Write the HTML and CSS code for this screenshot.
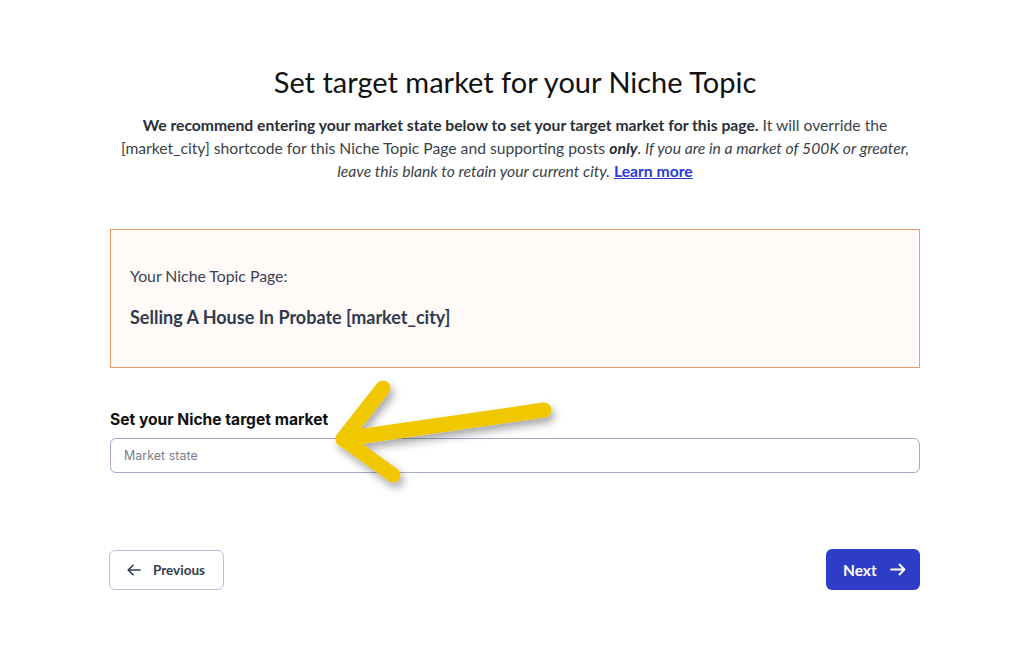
FILE: index.html
```html
<!DOCTYPE html>
<html lang="en">
<head>
    <meta charset="UTF-8">
    <meta name="viewport" content="width=device-width, initial-scale=1.0">
    <title>Set target market</title>
    <link rel="stylesheet" href="styles.css">
</head>
<body>
    <div class="page">
        <h1 class="title">Set target market for your Niche Topic</h1>
        <p class="intro">
            <strong>We recommend entering your market state below to set your target market for this page.</strong>
            It will override the [market_city] shortcode for this Niche Topic Page and supporting posts <strong><em>only</em></strong>.
            <em>If you are in a market of 500K or greater, leave this blank to retain your current city.</em>
            <a href="#">Learn more</a>
        </p>

        <div class="topic-box">
            <div class="topic-label">Your Niche Topic Page:</div>
            <div class="topic-name">Selling A House In Probate [market_city]</div>
        </div>

        <div class="field">
            <label for="state" class="field-label">Set your Niche target market</label>
            <input type="text" id="state" class="field-input" placeholder="Market state">
        </div>

        <div class="actions">
            <button class="btn btn-prev">
                <svg width="14" height="12" viewBox="0 0 14 12"><path d="M13 6H1.5M6 1.2L1.2 6 6 10.8" fill="none" stroke="currentColor" stroke-width="1.6" stroke-linecap="round" stroke-linejoin="round"/></svg>
                Previous
            </button>
            <button class="btn btn-next">
                Next
                <svg width="16" height="13" viewBox="0 0 16 13"><path d="M1 6.5h13.5M9.5 1.5l5 5-5 5" fill="none" stroke="currentColor" stroke-width="1.8" stroke-linecap="round" stroke-linejoin="round"/></svg>
            </button>
        </div>

        <!-- annotation arrow -->
        <svg class="pointer" width="260" height="130" viewBox="0 0 260 130">
            <defs>
                <filter id="shade" x="-20%" y="-30%" width="140%" height="160%">
                    <feDropShadow dx="3" dy="5" stdDeviation="4" flood-color="#000" flood-opacity="0.35"/>
                </filter>
            </defs>
            <g filter="url(#shade)" fill="none" stroke="#f1c800" stroke-width="15" stroke-linecap="round" stroke-linejoin="round">
                <path d="M231 36L30 65"/>
                <path d="M70 14L30 65L80 101"/>
            </g>
        </svg>
    </div>
</body>
</html>
```

FILE: styles.css
```css
body {
    margin: 0;
    background: #fff;
    font-family: Lato, "Open Sans", sans-serif;
    color: #2f3542;
}
.page {
    position: relative;
    width: 810px;
    margin: 0 0 0 110px;
    padding-top: 62px;
}
.title {
    margin: 0;
    text-align: center;
    font-size: 29px;
    font-weight: 400;
    color: #111;
    line-height: 40px;
}
.intro {
    margin: 12px 0 0;
    text-align: center;
    font-size: 15.7px;
    line-height: 23px;
    color: #3b3f48;
}
.intro strong {
    font-weight: 700;
    color: #2a2e36;
}
.intro a {
    color: #2b3bd3;
    font-weight: 700;
    font-style: normal;
}
.topic-box {
    margin-top: 46px;
    height: 139px;
    box-sizing: border-box;
    border: 1.5px solid #ef9a6e;
    background: #fffaf7;
    padding: 36px 19px 0;
}
.topic-label {
    font-size: 15.8px;
    color: #3a4256;
}
.topic-name {
    margin-top: 21px;
    font-size: 18px;
    font-weight: 700;
    color: #2f3a4f;
}
.field {
    margin-top: 42px;
}
.field-label {
    display: block;
    font-family: Inter, sans-serif;
    font-size: 15.6px;
    font-weight: 700;
    color: #111;
    margin-bottom: 9px;
}
.field-input {
    display: block;
    width: 100%;
    box-sizing: border-box;
    height: 35px;
    border: 1px solid #a3abc6;
    border-radius: 6px;
    padding: 0 13px;
    font-family: Inter, sans-serif;
    font-size: 12.5px;
    color: #333;
    outline: none;
}
.field-input::placeholder {
    color: #7a7f88;
}
.actions {
    margin-top: 76px;
    display: flex;
    justify-content: space-between;
    align-items: center;
}
.btn {
    display: flex;
    align-items: center;
    border-radius: 6px;
    font-family: Lato, sans-serif;
    font-weight: 700;
    cursor: pointer;
}
.btn-prev {
    margin-left: -1px;
    height: 40px;
    width: 115px;
    padding: 0 0 0 17px;
    gap: 12px;
    background: #fff;
    border: 1.5px solid #b9c1d6;
    color: #323b50;
    font-size: 13.5px;
}
.btn-next {
    height: 41px;
    width: 94px;
    padding: 0 0 0 17px;
    gap: 13px;
    background: #2e3dc8;
    border: none;
    color: #fff;
    font-size: 15.5px;
}
.pointer {
    position: absolute;
    left: 203px;
    top: 374px;
}
```
